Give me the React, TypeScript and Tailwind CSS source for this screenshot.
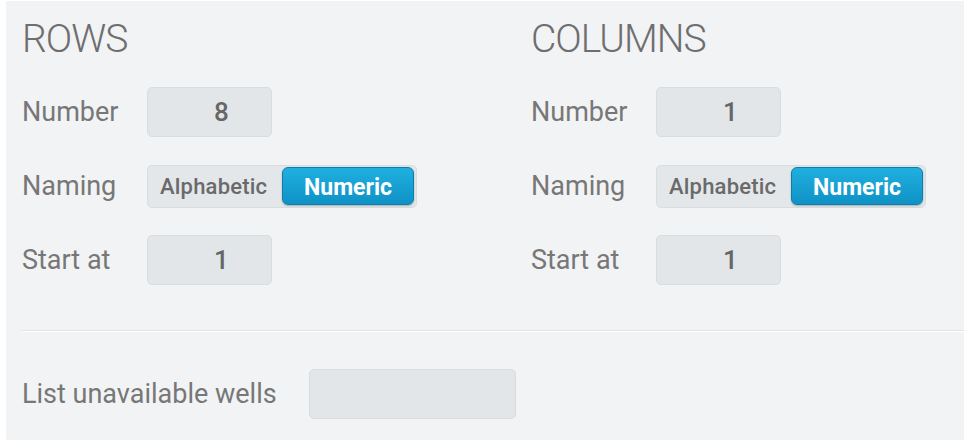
import React from 'react';

const Field: React.FC<{ value?: string; className?: string }> = ({ value, className = 'w-[125px]' }) => (
  <div
    className={`${className} h-[50px] rounded-[5px] bg-[#e2e6e9] border border-[#d8dde0] flex items-center justify-center pl-[24px] text-[26px] font-medium text-[#666]`}
  >
    {value}
  </div>
);

const Toggle: React.FC = () => (
  <div className="w-[270px] h-[43px] rounded-[5px] bg-[#e3e7ea] border border-[#d8dde0] flex items-center pl-[12px] pr-[2px]">
    <span className="text-[22px] font-medium text-[#6a6a6a] tracking-[0.2px]">Alphabetic</span>
    <button className="ml-auto w-[132px] h-[38px] rounded-[6px] bg-gradient-to-b from-[#1fb0df] to-[#0f92c6] border border-[#0d7eac] shadow-[0_1px_2px_rgba(0,0,0,0.25)] text-white text-[23px] font-bold leading-none pt-[2px]">
      Numeric
    </button>
  </div>
);

const Section: React.FC<{ title: string; number: string }> = ({ title, number }) => (
  <div className="flex flex-col">
    <h2 className="text-[39px] font-light leading-[44px] text-[#6e6e6e] tracking-[-1px] h-[74px] pt-[16px]">{title}</h2>
    <div className="flex items-center h-[74px]">
      <span className="w-[125px] text-[27px] text-[#777]">Number</span>
      <Field value={number} />
    </div>
    <div className="flex items-center h-[74px]">
      <span className="w-[125px] text-[27px] text-[#777]">Naming</span>
      <Toggle />
    </div>
    <div className="flex items-center h-[74px]">
      <span className="w-[125px] text-[27px] text-[#777]">Start at</span>
      <Field value="1" />
    </div>
  </div>
);

export default function App() {
  return (
    <div className="w-[964px] h-[440px] bg-white pl-[6px] pt-[1px] overflow-hidden" style={{ fontFamily: 'Roboto, "Liberation Sans", sans-serif' }}>
      <div className="h-full bg-[#f2f3f5] pl-[16px] flex flex-col">
        <div className="grid grid-cols-[509px_1fr]">
          <Section title="ROWS" number="8" />
          <Section title="COLUMNS" number="1" />
        </div>
        <div className="mt-[33px] border-t border-[#dfe3e6] border-b-white border-b h-0" />
        <div className="flex items-center mt-[37px]">
          <span className="w-[287px] text-[27px] text-[#777]">List unavailable wells</span>
          <Field className="w-[207px]" />
        </div>
      </div>
    </div>
  );
}
